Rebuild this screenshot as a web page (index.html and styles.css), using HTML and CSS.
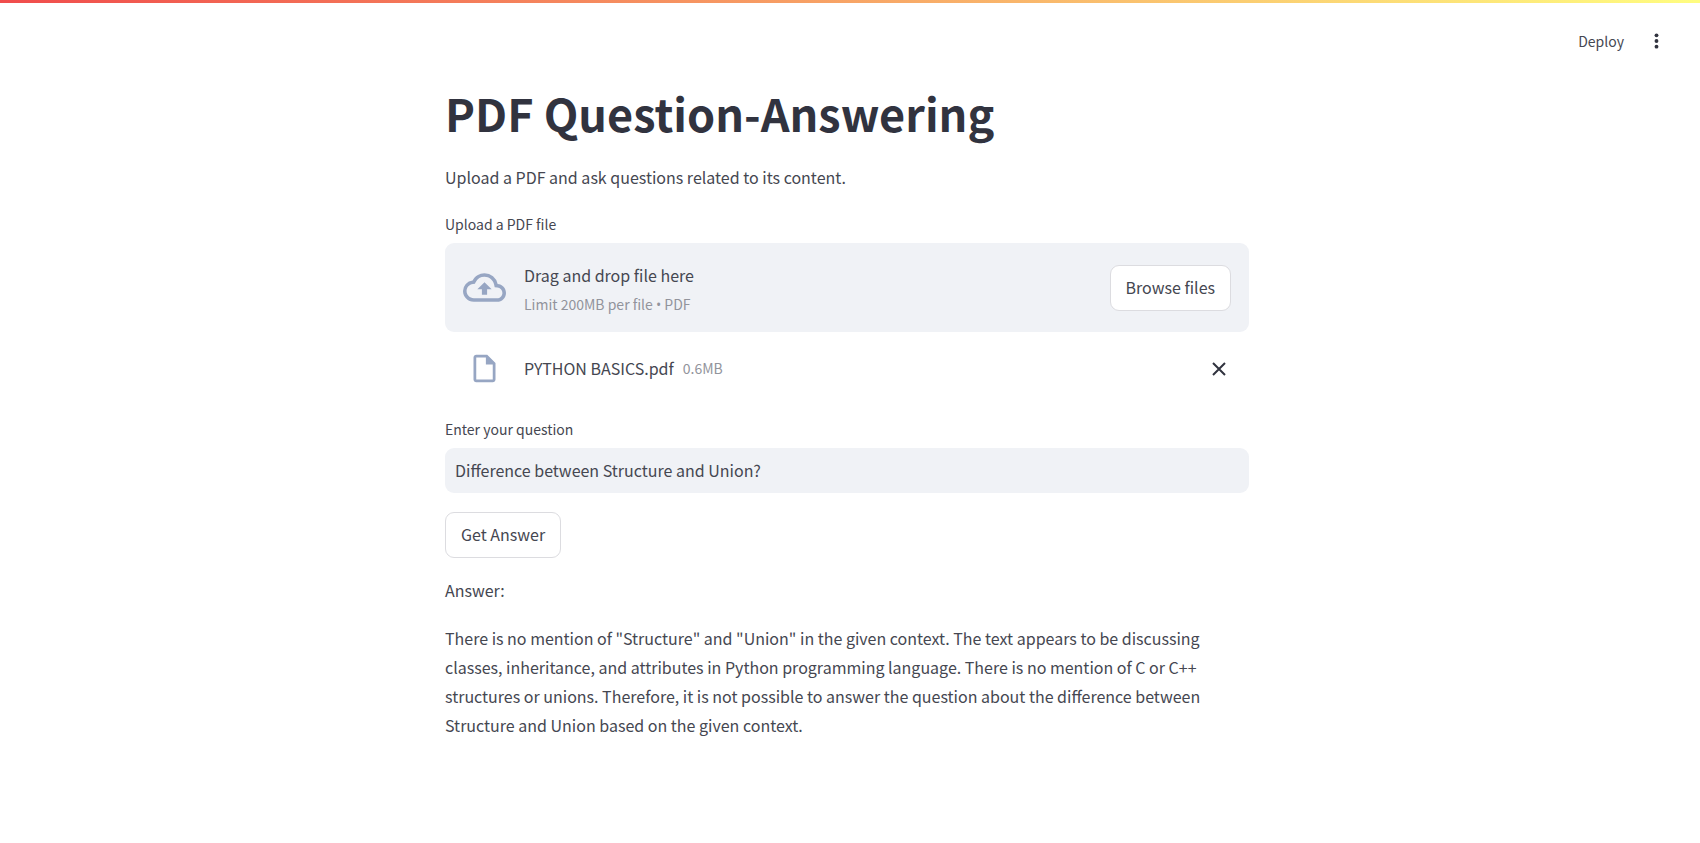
FILE: index.html
```html
<!DOCTYPE html>
<html lang="en">
<head>
<meta charset="utf-8">
<meta name="viewport" content="width=device-width, initial-scale=1">
<title>PDF Question-Answering</title>
<link rel="stylesheet" href="styles.css">
</head>
<body>
<div class="decoration"></div>
<header class="toolbar">
  <button class="toolbar-button" type="button">Deploy</button>
  <button class="toolbar-button" type="button" aria-label="Main menu">
    <svg class="menu-icon" viewBox="0 0 24 24" aria-hidden="true"><circle cx="12" cy="5.2" r="2.3"/><circle cx="12" cy="12" r="2.3"/><circle cx="12" cy="18.8" r="2.3"/></svg>
  </button>
</header>
<div class="page">
<main class="content">
  <h1 class="title">PDF Question-Answering</h1>
  <p class="text">Upload a PDF and ask questions related to its content.</p>
  <section class="field">
    <label class="label" for="browse">Upload a PDF file</label>
    <div class="dropzone">
      <svg class="cloud-icon" viewBox="0 0 24 24" aria-hidden="true"><path d="M19.35 10.04A7.49 7.49 0 0 0 12 4C9.11 4 6.6 5.64 5.35 8.04A5.994 5.994 0 0 0 0 14c0 3.31 2.69 6 6 6h13c2.76 0 5-2.24 5-5 0-2.64-2.05-4.78-4.65-4.96zM19 18H6c-2.21 0-4-1.79-4-4 0-2.05 1.53-3.76 3.56-3.97l1.07-.11.5-.95A5.469 5.469 0 0 1 12 6c2.62 0 4.88 1.86 5.39 4.43l.3 1.5 1.53.11A2.98 2.98 0 0 1 22 15c0 1.65-1.35 3-3 3zM8 13h2.55v3h2.9v-3H16l-4-4z"/></svg>
      <div class="dropzone-text">
        <span>Drag and drop file here</span>
        <small class="hint">Limit 200MB per file <span class="bullet">•</span> PDF</small>
      </div>
      <button class="button" id="browse" type="button">Browse files</button>
    </div>
    <div class="file">
      <svg class="file-icon" viewBox="0 0 24 24" aria-hidden="true"><path fill-rule="evenodd" d="M6 2h8l6 6v12c0 1.100-.9 2-2 2H6c-1.100 0-2-.9-2-2V4c0-1.100.9-2 2-2zM13 4H6v16h12V9h-5z"/></svg>
      <div class="file-text">
        <span>PYTHON BASICS.pdf</span>
        <small class="hint">0.6MB</small>
      </div>
      <button class="remove" type="button" aria-label="Remove file">
        <svg class="remove-icon" viewBox="0 0 14 14" aria-hidden="true"><path d="M1 1l12 12M13 1L1 13"/></svg>
      </button>
    </div>
  </section>
  <section class="field question">
    <label class="label" for="question">Enter your question</label>
    <input class="input" id="question" type="text" value="Difference between Structure and Union?">
  </section>
  <button class="button submit" type="button">Get Answer</button>
  <p class="text">Answer:</p>
  <p class="text">There is no mention of "Structure" and "Union" in the given context. The text appears to be discussing classes, inheritance, and attributes in Python programming language. There is no mention of C or C++ structures or unions. Therefore, it is not possible to answer the question about the difference between Structure and Union based on the given context.</p>
</main>
</div>
</body>
</html>
```
FILE: styles.css
```css
* {
  box-sizing: border-box;
}

body {
  margin: 0;
  background: #fff;
  color: #454751;
  font-family: "Noto Sans CJK SC", "Noto Sans", sans-serif;
  font-size: 16px;
  line-height: 29px;
}

button,
input {
  font: inherit;
  color: inherit;
}

.decoration {
  height: 3px;
  background: linear-gradient(90deg, #f04c4c, #fffd80);
}

.toolbar {
  display: flex;
  justify-content: flex-end;
  align-items: center;
  gap: 21px;
  height: 76px;
  padding: 0 32px 0 16px;
}

.toolbar-button {
  display: flex;
  align-items: center;
  padding: 0;
  border: 0;
  background: none;
  font-size: 14px;
  line-height: 22px;
  cursor: pointer;
}

.menu-icon {
  width: 23px;
  height: 20px;
  fill: #31333f;
}

.page {
  padding: 4px 6px 0 0;
}

.content {
  width: 100%;
  max-width: 804px;
  margin: 0 auto;
}

.title {
  margin: 0 0 20px;
  color: #31333f;
  font-size: 45px;
  font-weight: 700;
  line-height: 60px;
}

.text {
  margin: 0 0 19px;
}

.field {
  display: flex;
  flex-direction: column;
}

.label {
  margin: 2px 0 8px;
  font-size: 14px;
  line-height: 22px;
}

.dropzone {
  display: flex;
  align-items: center;
  gap: 18px;
  padding: 13px 18px;
  border-radius: 9px;
  background: #f0f2f6;
}

.dropzone-text {
  display: flex;
  flex: 1;
  flex-direction: column;
  padding-top: 5px;
}

.hint {
  color: #92949c;
  font-size: 14px;
}

.bullet {
  font-family: "Open Sans", sans-serif;
}

.cloud-icon {
  width: 43px;
  height: 43px;
  fill: #97a6c3;
}

.file {
  display: flex;
  align-items: center;
  gap: 18px;
  padding: 20px 18px 16px;
}

.file-icon {
  width: 33px;
  height: 33px;
  margin: 0 5px;
  fill: #97a6c3;
}

.file-text {
  display: flex;
  flex: 1;
  gap: 9px;
}

.remove {
  display: flex;
  padding: 5px;
  border: 0;
  background: none;
  cursor: pointer;
}

.remove-icon {
  width: 14px;
  height: 14px;
  fill: none;
  stroke: #31333f;
  stroke-width: 2;
}

.button {
  height: 46px;
  padding: 0 15px 1px;
  border: 1px solid #dcdce0;
  border-radius: 9px;
  background: #fff;
  cursor: pointer;
}

.input {
  width: 100%;
  height: 45px;
  padding: 0 10px 1px;
  border: 0;
  border-radius: 9px;
  background: #f0f2f6;
}

.question {
  margin: 15px 0 19px;
}

.submit {
  display: block;
  margin-bottom: 18px;
}
```
